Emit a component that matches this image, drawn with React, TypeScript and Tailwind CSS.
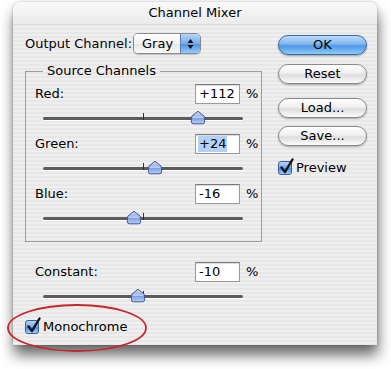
import React from "react";

function Thumb({ x }: { x: number }) {
  return (
    <svg
      className="absolute top-[6px]"
      style={{ left: x - 8 }}
      width="16"
      height="15"
      viewBox="0 0 16 15"
    >
      <defs>
        <linearGradient id="thg" x1="0" y1="0" x2="0" y2="1">
          <stop offset="0" stopColor="#cfd8f6" />
          <stop offset="0.45" stopColor="#9bb1ea" />
          <stop offset="0.55" stopColor="#7b9de3" />
          <stop offset="1" stopColor="#b6d2f8" />
        </linearGradient>
      </defs>
      <path
        d="M8 1.2 L14.2 6.2 Q14.6 6.6 14.6 7.2 L14.6 11.8 Q14.6 13.8 12.6 13.8 L3.4 13.8 Q1.4 13.8 1.4 11.8 L1.4 7.2 Q1.4 6.6 1.8 6.2 Z"
        fill="url(#thg)"
        stroke="#45558f"
        strokeWidth="1"
        strokeLinejoin="round"
      />
      <path d="M3 7.2 L13 7.2" stroke="#e4ebfb" strokeWidth="0.8" />
    </svg>
  );
}

function Slider({ x }: { x: number }) {
  return (
    <div className="relative h-[30px] w-[200px]">
      <div className="absolute left-0 right-0 top-[13px] h-[3px] rounded-full bg-[#5c5c5c] shadow-[0_1px_0_#ffffff]" />
      <div className="absolute left-[100px] top-[9px] h-[7px] w-px bg-[#2e2e2e]" />
      <Thumb x={x} />
    </div>
  );
}

function NumField({ value, selected }: { value: string; selected?: boolean }) {
  return (
    <div className="flex h-[20px] w-[45px] items-center border border-[#9a9a9a] border-t-[#7a7a7a] bg-white pl-[3px] shadow-[inset_0_1px_1px_rgba(0,0,0,0.15)]">
      <span className={selected ? "bg-[#b4d0f7] px-[1px] -ml-[1px]" : ""}>{value}</span>
    </div>
  );
}

function ChannelRow({ label, value, x, selected }: { label: string; value: string; x: number; selected?: boolean }) {
  return (
    <div>
      <div className="flex h-[20px] items-center">
        <div className="w-[160px]">{label}</div>
        <NumField value={value} selected={selected} />
        <div className="ml-[6px]">%</div>
      </div>
      <div className="ml-[8px]">
        <Slider x={x} />
      </div>
    </div>
  );
}

function AquaButton({ label, primary }: { label: string; primary?: boolean }) {
  return (
    <div
      className={
        primary
          ? "flex h-[20px] w-[89px] items-center justify-center rounded-full border border-[#3d6aa8] bg-[linear-gradient(180deg,#bcdcfa_0%,#7fb6ee_45%,#4f97e6_55%,#8ccbfa_100%)] shadow-[0_1px_2px_rgba(0,0,0,0.35)]"
          : "flex h-[20px] w-[89px] items-center justify-center rounded-full border border-[#8a8a8a] bg-[linear-gradient(180deg,#ffffff_0%,#f0f0f0_45%,#dedede_55%,#fbfbfb_100%)] shadow-[0_1px_2px_rgba(0,0,0,0.3)]"
      }
    >
      {label}
    </div>
  );
}

function Checkbox() {
  return (
    <div className="relative h-[14px] w-[14px] rounded-[3px] border border-[#3a5c98] bg-[linear-gradient(180deg,#b9d6f7_0%,#6fa6e8_50%,#4a8fe3_55%,#9fd0fa_100%)]">
      <svg className="absolute -top-[4px] left-[0px]" width="16" height="17" viewBox="0 0 16 17">
        <path d="M2.5 9.5 L6 14 L13.5 1.5" fill="none" stroke="#111" strokeWidth="2.4" strokeLinecap="round" strokeLinejoin="round" />
      </svg>
    </div>
  );
}

export default function App() {
  return (
    <div className="relative h-[369px] w-[391px] overflow-hidden bg-white font-['DejaVu_Sans',sans-serif] text-[13px] leading-[16px] text-black">
      <div className="pl-[13px] pt-[2px]">
        <div className="flex h-[343px] w-[364px] flex-col overflow-hidden rounded-t-[7px] bg-[repeating-linear-gradient(180deg,#efefef_0px,#efefef_2px,#e7e7e7_2px,#e7e7e7_4px)] shadow-[1px_10px_14px_rgba(0,0,0,0.6),0_0_3px_rgba(0,0,0,0.25)]">
          <div className="flex h-[23px] items-center justify-center border-b border-[#dadada] bg-[linear-gradient(180deg,#f9f9f9_0%,#ebebeb_100%)]">
            Channel Mixer
          </div>
          <div className="flex pl-[12px] pt-[8px]">
            <div className="w-[237px]">
              <div className="flex h-[21px] items-center">
                <div className="w-[108px]">Output Channel:</div>
                <div className="flex h-[21px] w-[68px] overflow-hidden rounded-[5px] border border-[#8a8a8a] shadow-[0_1px_1px_rgba(0,0,0,0.2)]">
                  <div className="flex flex-1 items-center bg-[linear-gradient(180deg,#ffffff_0%,#f2f2f2_50%,#e6e6e6_55%,#fafafa_100%)] pl-[8px]">
                    Gray
                  </div>
                  <div className="flex w-[20px] items-center justify-center border-l border-[#5b7fb5] bg-[linear-gradient(180deg,#b5d6f7_0%,#74ade9_50%,#4e94e3_55%,#96cdfa_100%)]">
                    <svg width="7" height="12" viewBox="0 0 7 12">
                      <path d="M3.5 1 L6.5 5 L0.5 5 Z" fill="#111" />
                      <path d="M3.5 11 L6.5 7 L0.5 7 Z" fill="#111" />
                    </svg>
                  </div>
                </div>
              </div>
              <fieldset className="mt-[9px] border border-[#9c9c9c] px-0 pb-[7px] pl-[9px] pt-[5px]">
                <legend className="ml-[8px] px-[4px]">Source Channels</legend>
                <ChannelRow label="Red:" value="+112" x={155} />
                <ChannelRow label="Green:" value="+24" x={112} selected />
                <ChannelRow label="Blue:" value="-16" x={91} />
              </fieldset>
              <div className="mt-[20px] pl-[10px]">
                <div className="flex h-[20px] items-center">
                  <div className="w-[160px]">Constant:</div>
                  <NumField value="-10" />
                  <div className="ml-[6px]">%</div>
                </div>
                <div className="ml-[8px]">
                  <Slider x={95} />
                </div>
              </div>
              <div className="mt-[7px] flex items-center gap-[4px]">
                <Checkbox />
                <span>Monochrome</span>
              </div>
            </div>
            <div className="ml-[16px] flex w-[89px] flex-col pt-[2px]">
              <AquaButton label="OK" primary />
              <div className="mt-[9px]">
                <AquaButton label="Reset" />
              </div>
              <div className="mt-[14px]">
                <AquaButton label="Load..." />
              </div>
              <div className="mt-[8px]">
                <AquaButton label="Save..." />
              </div>
              <div className="mt-[14px] flex items-center gap-[4px]">
                <Checkbox />
                <span>Preview</span>
              </div>
            </div>
          </div>
        </div>
      </div>
      <svg className="absolute left-[6px] top-[303px]" width="144" height="52" viewBox="0 0 144 52">
        <ellipse cx="71" cy="25" rx="69" ry="23" fill="none" stroke="#c8262b" strokeWidth="1.8" />
      </svg>
    </div>
  );
}
